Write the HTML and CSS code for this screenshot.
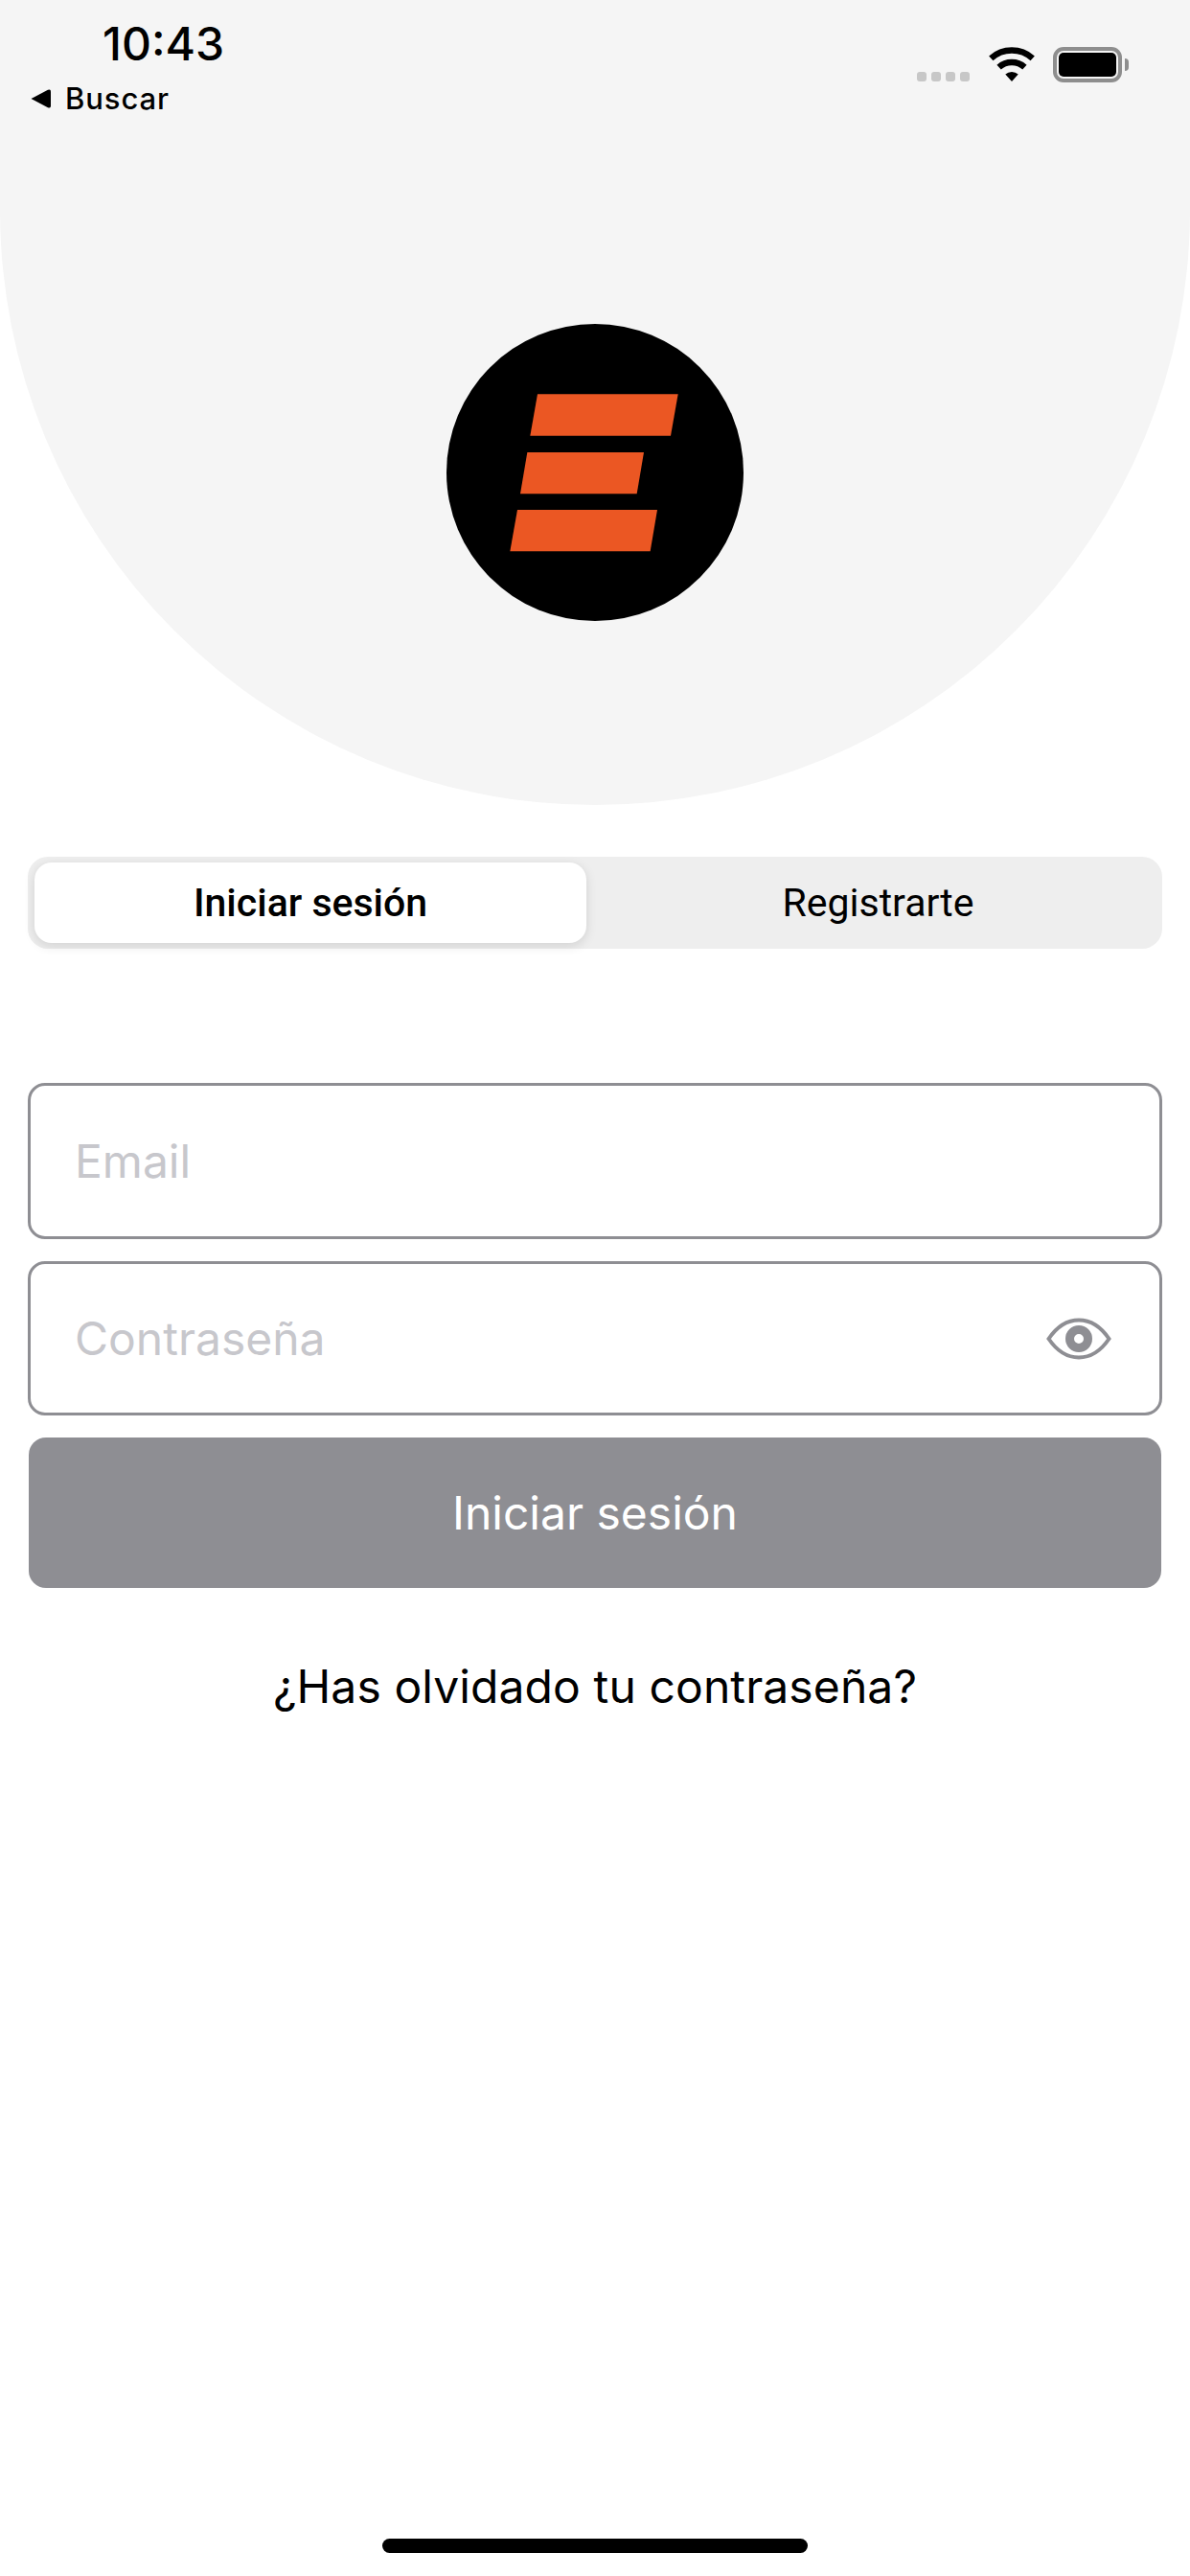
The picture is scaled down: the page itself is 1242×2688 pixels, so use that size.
FILE: index.html
```html
<!DOCTYPE html>
<html lang="es">
<head>
  <meta charset="UTF-8" />
  <meta name="viewport" content="width=device-width, initial-scale=1.0" />
  <title>Iniciar sesión</title>
  <link rel="stylesheet" href="styles.css">
</head>
<body>
  <header class="hero">
    <div class="status-bar">
      <div class="status-left">
        <div class="time">10:43</div>
        <div class="back">
          <svg class="back-arrow" width="21" height="20" viewBox="0 0 21 20"><path d="M0.500 10 L18 0.800 Q21 -0.500 21 2.500 L21 17.500 Q21 20.500 18 19.200 Z" fill="#000"/></svg>
          <span>Buscar</span>
        </div>
      </div>
      <div class="status-right">
        <div class="signal"><i></i><i></i><i></i><i></i></div>
        <svg class="wifi" width="48" height="36" viewBox="0 0 48 36">
          <path d="M24 36 L17.300 28.600 A10 10 0 0 1 30.700 28.600 Z" fill="#000"/>
          <path d="M10.600 21.100 A20 20 0 0 1 37.400 21.100" fill="none" stroke="#000" stroke-width="6.500"/>
          <path d="M2.300 11.900 A32.500 32.500 0 0 1 45.700 11.900" fill="none" stroke="#000" stroke-width="6.500"/>
        </svg>
        <div class="battery">
          <div class="battery-body"><div class="battery-fill"></div></div>
          <div class="battery-cap"></div>
        </div>
      </div>
    </div>
    <svg class="logo" width="310" height="310" viewBox="50 55 930 930">
      <circle cx="515" cy="520" r="465" fill="#000"/>
      <polygon points="335,275 775,275 752,405 312,405" fill="#eb5723"/>
      <polygon points="303,457 668,457 646,587 281,587" fill="#eb5723"/>
      <polygon points="272,637 710,637 688,767 249,767" fill="#eb5723"/>
    </svg>
  </header>

  <main class="content">
    <div class="tabs">
      <div class="tab active">Iniciar sesión</div>
      <div class="tab">Registrarte</div>
    </div>

    <form class="login-form">
      <div class="field field-email">
        <input type="text" placeholder="Email">
      </div>
      <div class="field">
        <input type="password" placeholder="Contraseña">
        <svg class="eye" width="68" height="44" viewBox="0 0 68 44">
          <path d="M2.500 22 C12 8 23 2.500 34 2.500 C45 2.500 56 8 65.500 22 C56 36 45 41.500 34 41.500 C23 41.500 12 36 2.500 22 Z" fill="none" stroke="#8e8e93" stroke-width="4"/>
          <circle cx="34" cy="22" r="9.500" fill="none" stroke="#8e8e93" stroke-width="9"/>
        </svg>
      </div>
      <button type="button" class="submit-btn">Iniciar sesión</button>
    </form>

    <a href="#" class="forgot">¿Has olvidado tu contraseña?</a>
  </main>

  <div class="home-indicator"></div>
</body>
</html>
```

FILE: styles.css
```css
* {
  box-sizing: border-box;
}
body {
  margin: 0;
  height: 2688px;
  display: flex;
  flex-direction: column;
  background: #fff;
  color: #000;
  font-family: Inter, "Liberation Sans", sans-serif;
  overflow: hidden;
}
.hero {
  height: 840px;
  flex: none;
  background: #f5f5f5;
  border-radius: 0 0 621px 621px;
  display: flex;
  flex-direction: column;
  align-items: center;
}
.status-bar {
  width: 100%;
  height: 338px;
  display: flex;
  justify-content: space-between;
  align-items: flex-start;
  padding: 0 64px 0 32px;
}
.status-left {
  padding-top: 19px;
}
.time {
  font-size: 48px;
  font-weight: 500;
  line-height: 54px;
  margin-left: 75px;
}
.back {
  display: flex;
  align-items: center;
  gap: 15px;
  font-size: 31px;
  font-weight: 500;
  line-height: 36px;
  letter-spacing: 0.9px;
  margin-top: 12px;
}
.status-right {
  display: flex;
  align-items: flex-end;
  padding-top: 49px;
}
.signal {
  display: flex;
  gap: 5px;
  margin: 0 20px 1px 0;
}
.signal i {
  width: 10px;
  height: 10px;
  border-radius: 3px;
  background: #c7c7c7;
}
.wifi {
  margin: 0 19px 1px 0;
}
.battery {
  display: flex;
  align-items: center;
}
.battery-body {
  width: 72px;
  height: 37px;
  padding: 2px;
  border: 4px solid #8e8e8e;
  border-radius: 11px;
}
.battery-fill {
  height: 100%;
  background: #000;
  border-radius: 5px;
}
.battery-cap {
  width: 4px;
  height: 13px;
  background: #8e8e8e;
  border-radius: 0 4px 4px 0;
  margin-left: 3px;
}
.logo {
  display: block;
}
.content {
  padding: 54px 29px 0 29px;
}
.tabs {
  height: 96px;
  display: flex;
  padding: 6px 6px 6px 7px;
  background: #eeeeee;
  border-radius: 21px;
}
.tab {
  flex: 1;
  display: flex;
  align-items: center;
  justify-content: center;
  padding-left: 14px;
  font-size: 41px;
  font-family: Roboto, sans-serif;
  font-weight: 400;
  border-radius: 18px;
}
.tab.active {
  flex: none;
  width: 576px;
  padding-left: 0;
  font-weight: 500;
  background: #fff;
  box-shadow: 0 3px 12px rgba(0, 0, 0, 0.12);
}
.login-form {
  margin-top: 140px;
  display: flex;
  flex-direction: column;
  gap: 23px;
}
.field {
  height: 161px;
  border: 3px solid #8e8e93;
  border-radius: 18px;
  padding: 0 50px 0 46px;
  display: flex;
  align-items: center;
  justify-content: space-between;
}
.field-email {
  height: 163px;
}
.field input {
  flex: 1;
  min-width: 0;
  border: none;
  outline: none;
  padding: 0;
  background: none;
  font-family: inherit;
  font-size: 48px;
}
.field input::placeholder {
  color: #c7c7cc;
  opacity: 1;
}
.eye {
  flex: none;
}
.submit-btn {
  height: 157px;
  margin: 0 1px;
  border: none;
  border-radius: 18px;
  background: #8e8e93;
  color: #fff;
  font-family: inherit;
  font-size: 48px;
}
.forgot {
  display: block;
  margin-top: 74px;
  text-align: center;
  font-size: 48px;
  letter-spacing: 0.1px;
  line-height: 58px;
  color: #000;
  text-decoration: none;
}
.home-indicator {
  width: 444px;
  height: 15px;
  flex: none;
  margin: auto auto 24px;
  background: #000;
  border-radius: 8px;
}
```
